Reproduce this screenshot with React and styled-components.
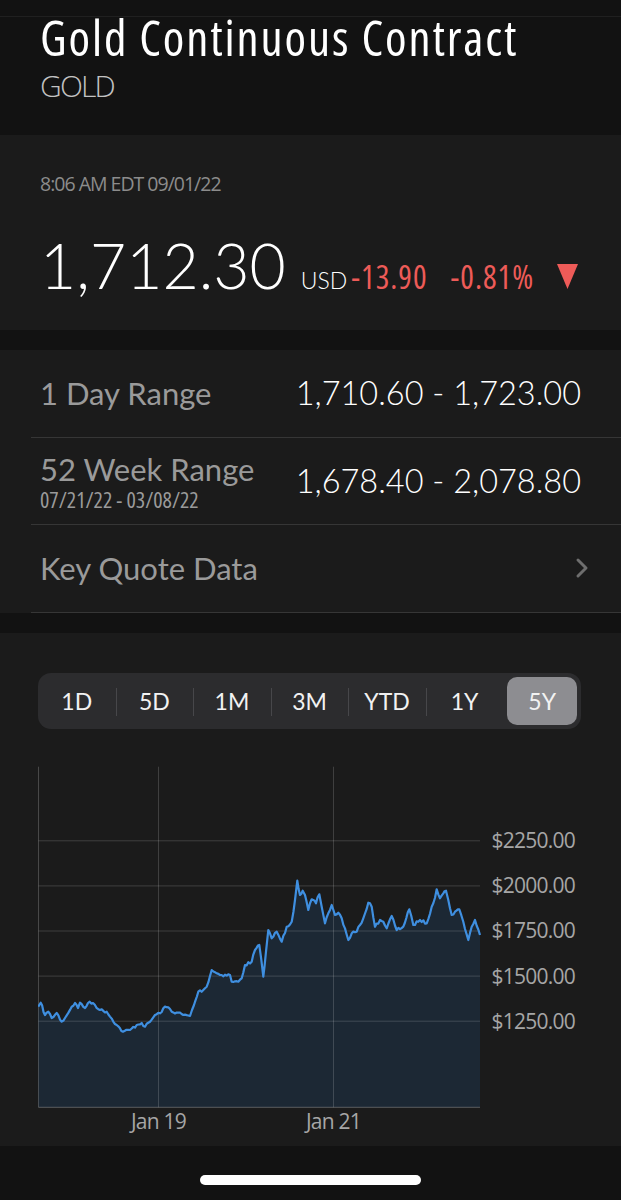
import React from "react";
import styled, { createGlobalStyle } from "styled-components";

const NARROW = `"Open Sans", "Liberation Sans", sans-serif`;
const ROUND = `Lato, "Open Sans", sans-serif`;

const GlobalStyle = createGlobalStyle`
  html, body {
    margin: 0;
    padding: 0;
    background: #121212;
  }
  body {
    font-family: ${NARROW};
    -webkit-font-smoothing: antialiased;
  }
`;

// traced price points, screen coords (x, y) of the 5Y chart
const TRACE = [
  [38.3, 1006.7], [40.7, 1002.7], [45, 1015], [48.3, 1011.7], [51.7, 1018],
  [56.7, 1013], [61.7, 1021.7], [65, 1018], [71.7, 1006.7], [75, 1003],
  [78, 1008], [80, 1002.7], [85, 1008], [88, 1003], [93, 1003], [100, 1010],
  [106.7, 1011.7], [116.7, 1025], [123, 1031.7], [130, 1030], [136.7, 1025],
  [141.7, 1023], [145, 1026.7], [150, 1021.7], [155, 1015], [160, 1013.3],
  [163.3, 1008.3], [168.3, 1007.3], [171.7, 1011.7], [178.3, 1012.7],
  [183.3, 1015], [190, 1016], [194, 1005], [198.3, 991.7], [203.3, 990],
  [206.7, 986.7], [211.7, 970], [216.7, 973.3], [221.7, 975], [230, 975],
  [231.7, 981.7], [238.3, 981.7], [241.7, 978.3], [245, 965], [251.7, 961.7],
  [255, 950], [259.3, 945], [263.3, 976.7], [266, 951.7], [268.3, 930],
  [271.7, 938.3], [276.7, 931.7], [281.7, 941.7], [286.7, 926.7], [291.7, 921.7],
  [295, 900], [297.3, 880.7], [300, 895], [302.7, 890.7], [305, 895],
  [308.3, 910], [311.7, 899.3], [316, 903.3], [319.3, 894.3], [321.7, 906.7],
  [325, 923.3], [328.3, 913.3], [331.7, 905], [335, 915], [338.3, 912.7],
  [341.7, 918.3], [348.3, 940], [351.7, 933.3], [356.7, 931.7], [360, 925],
  [363.3, 918.3], [368.3, 902.7], [371.7, 906.7], [375, 926.7], [380, 920],
  [383.3, 921.7], [386.7, 928.3], [391.7, 916], [396.7, 930], [403.3, 926.7],
  [409.3, 909.3], [413.3, 925], [420, 920], [426.7, 923.3], [431.7, 906.7],
  [433.3, 903.3], [436.7, 889.3], [440, 898.3], [443.3, 893.3], [446, 890.7],
  [448.3, 900], [451.7, 915], [455, 911.7], [459.3, 909.3], [463.3, 921.7],
  [468.3, 940], [471.7, 926.7], [475, 920], [480, 935],
];

const OX = 38;
const OY = 760;
const PLOT = { left: 0.5, right: 442, top: 6.7, bottom: 347.3 };
const GRID = [
  { y: 80.8, label: "$2250.00" },
  { y: 125.9, label: "$2000.00" },
  { y: 171, label: "$1750.00" },
  { y: 216.1, label: "$1500.00" },
  { y: 261.2, label: "$1250.00" },
];
const XTICKS = [
  { x: 120.5, label: "Jan 19" },
  { x: 295.5, label: "Jan 21" },
];

// adds a bit of daily noise between the traced points
const buildPoints = () => {
  let seed = 7;
  const rand = () => {
    seed = (seed * 16807) % 2147483647;
    return seed / 2147483647 - 0.5;
  };
  const pts = [];
  for (let i = 0; i < TRACE.length - 1; i++) {
    const [x1, y1] = TRACE[i];
    const [x2, y2] = TRACE[i + 1];
    const steps = Math.max(1, Math.round((x2 - x1) / 1.7));
    for (let s = 0; s < steps; s++) {
      const t = s / steps;
      const jitter = s === 0 ? 0 : rand() * 3;
      pts.push([x1 + (x2 - x1) * t - OX, y1 + (y2 - y1) * t - OY + jitter]);
    }
  }
  const last = TRACE[TRACE.length - 1];
  pts.push([last[0] - OX, last[1] - OY]);
  return pts;
};

const POINTS = buildPoints();
const LINE = POINTS.map(([x, y]) => `${x.toFixed(1)},${y.toFixed(1)}`).join(" ");
const AREA = `${PLOT.left},${PLOT.bottom} ${LINE} ${PLOT.right},${PLOT.bottom}`;

const TABS = ["1D", "5D", "1M", "3M", "YTD", "1Y", "5Y"];
const ACTIVE = "5Y";

const Chart = () => (
  <ChartSvg width="545" height="380" viewBox="0 0 545 380">
    <polygon points={AREA} fill="#1c2834" />
    {GRID.map((g) => (
      <line key={g.label} x1={PLOT.left} x2={PLOT.right} y1={g.y} y2={g.y} stroke="rgba(255,255,255,0.16)" strokeWidth="1" />
    ))}
    {XTICKS.map((t) => (
      <line key={t.label} x1={t.x} x2={t.x} y1={PLOT.top} y2={PLOT.bottom} stroke="rgba(255,255,255,0.16)" strokeWidth="1" />
    ))}
    <line x1={PLOT.left} x2={PLOT.left} y1={PLOT.top} y2={PLOT.bottom} stroke="rgba(255,255,255,0.2)" strokeWidth="1" />
    <line x1={PLOT.left} x2={PLOT.right} y1={PLOT.bottom} y2={PLOT.bottom} stroke="rgba(255,255,255,0.22)" strokeWidth="1.2" />
    <polyline points={LINE} fill="none" stroke="#3f8fe0" strokeWidth="2.2" strokeLinejoin="round" />
    {GRID.map((g) => (
      <AxisText key={g.label} x="537" y={g.y + 7.4} textAnchor="end">
        {g.label}
      </AxisText>
    ))}
    {XTICKS.map((t) => (
      <AxisText key={t.label} x={t.x} y="369" textAnchor="middle">
        {t.label}
      </AxisText>
    ))}
  </ChartSvg>
);

const App = () => {
  return (
    <Page>
      <GlobalStyle />
      <Header>
        <HeaderInner>
          <Title>Gold Continuous Contract</Title>
          <Symbol>GOLD</Symbol>
        </HeaderInner>
      </Header>

      <PriceCard>
        <Timestamp>8:06 AM EDT 09/01/22</Timestamp>
        <PriceRow>
          <Price>1,712.30</Price>
          <Currency>USD</Currency>
          <Change>-13.90</Change>
          <Change $gap="23px">-0.81%</Change>
          <DownArrow width="21" height="25" viewBox="0 0 21 25">
            <polygon points="0,0 21,0 10.5,25" fill="#ee5b58" />
          </DownArrow>
        </PriceRow>
      </PriceCard>

      <RangeCard>
        <Row>
          <Label>1 Day Range</Label>
          <Value>1,710.60 - 1,723.00</Value>
        </Row>
        <Row>
          <LabelStack>
            <Label>52 Week Range</Label>
            <SubLabel>07/21/22 - 03/08/22</SubLabel>
          </LabelStack>
          <Value>1,678.40 - 2,078.80</Value>
        </Row>
        <Row $tight>
          <Label>Key Quote Data</Label>
          <Chevron width="14" height="22" viewBox="0 0 14 22">
            <polyline points="3,3 11,11 3,19" fill="none" stroke="#6e6e6e" strokeWidth="3" strokeLinecap="round" strokeLinejoin="round" />
          </Chevron>
        </Row>
      </RangeCard>

      <ChartCard>
        <TabBar>
          {TABS.map((t, i) => {
            const prev = TABS[i - 1];
            const sep = i > 0 && t !== ACTIVE && prev !== ACTIVE;
            return (
              <Tab key={t} $sep={sep}>
                <TabPill $active={t === ACTIVE}>{t}</TabPill>
              </Tab>
            );
          })}
        </TabBar>
        <Chart />
      </ChartCard>

      <HomeArea>
        <HomeIndicator />
      </HomeArea>
    </Page>
  );
};

export default App;

const Page = styled.div`
  width: 621px;
  min-height: 1200px;
  background: #121212;
  display: flex;
  flex-direction: column;
  overflow: hidden;
`;
const Header = styled.header`
  padding-top: 16px;
`;
const HeaderInner = styled.div`
  border-top: 1px solid #202020;
  padding: 0 40px 31px;
`;
const Title = styled.h1`
  margin: 0;
  font-family: ${NARROW};
  font-stretch: 75%;
  font-weight: 500;
  font-size: 49px;
  letter-spacing: 1.9px;
  line-height: 40px;
  color: #ffffff;
  white-space: nowrap;
`;
const Symbol = styled.div`
  margin-top: 11px;
  font-size: 30px;
  letter-spacing: -1.8px;
  font-weight: 300;
  line-height: 36px;
  color: #c2c2c2;
`;
const PriceCard = styled.section`
  box-sizing: border-box;
  height: 195px;
  background: #1b1b1b;
  padding: 38px 40px 0;
`;
const Timestamp = styled.div`
  font-size: 19.5px;
  letter-spacing: -1px;
  line-height: 22px;
  color: #8c8c8c;
`;
const PriceRow = styled.div`
  display: flex;
  align-items: baseline;
  margin-top: 35px;
  white-space: nowrap;
`;
const Price = styled.div`
  font-family: ${ROUND};
  font-weight: 300;
  font-size: 62.5px;
  line-height: 70px;
  color: #ffffff;
`;
const Currency = styled.span`
  margin-left: 15px;
  font-family: ${ROUND};
  font-weight: 300;
  font-size: 23px;
  color: #ffffff;
`;
const Change = styled.span`
  margin-left: ${(p) => p.$gap || "4px"};
  font-stretch: 75%;
  font-size: 32px;
  letter-spacing: 1px;
  color: #ee5b58;
`;
const DownArrow = styled.svg`
  margin-left: 23px;
  display: block;
  align-self: baseline;
`;
const RangeCard = styled.section`
  margin-top: 20px;
  background: #1b1b1b;
`;
const Row = styled.div`
  box-sizing: border-box;
  height: 87.5px;
  margin-left: 31px;
  padding: 0 ${(p) => (p.$tight ? "32px" : "40px")} 0 9px;
  display: flex;
  align-items: center;
  justify-content: space-between;
  border-bottom: 1px solid #363636;
`;
const LabelStack = styled.div`
  display: flex;
  flex-direction: column;
`;
const Label = styled.div`
  font-family: ${ROUND};
  font-size: 31px;
  line-height: 36px;
  color: #9a9a9a;
`;
const SubLabel = styled.div`
  font-stretch: 75%;
  font-size: 22px;
  line-height: 24px;
  color: #9a9a9a;
`;
const Value = styled.div`
  font-family: ${ROUND};
  font-weight: 300;
  font-size: 32.5px;
  line-height: 36px;
  color: #ffffff;
  white-space: nowrap;
`;
const Chevron = styled.svg`
  display: block;
`;
const ChartCard = styled.section`
  margin-top: 20.5px;
  background: #1b1b1b;
  padding: 40px 0 6px;
`;
const TabBar = styled.div`
  margin-left: 38px;
  width: 543px;
  height: 56px;
  border-radius: 13px;
  background: #2c2c2e;
  display: grid;
  grid-template-columns: repeat(7, 1fr);
`;
const Tab = styled.div`
  position: relative;
  display: flex;
  &::before {
    content: "";
    display: ${(p) => (p.$sep ? "block" : "none")};
    position: absolute;
    left: 0;
    top: 15px;
    height: 28px;
    border-left: 1px solid #47474a;
  }
`;
const TabPill = styled.div`
  flex: 1;
  margin: 4px;
  border-radius: 10px;
  display: flex;
  align-items: center;
  justify-content: center;
  font-family: ${ROUND};
  font-size: 23px;
  color: #f2f2f2;
  background: ${(p) => (p.$active ? "#8d8d91" : "transparent")};
`;
const ChartSvg = styled.svg`
  display: block;
  margin: 31px 0 0 38px;
`;
const AxisText = styled.text`
  font-family: ${NARROW};
  font-size: 21px;
  letter-spacing: -0.75px;
  fill: #a6a6a6;
`;
const HomeArea = styled.div`
  padding: 29px 0 15px;
  display: flex;
  justify-content: center;
`;
const HomeIndicator = styled.div`
  width: 221px;
  height: 10px;
  border-radius: 5px;
  background: #ffffff;
`;
